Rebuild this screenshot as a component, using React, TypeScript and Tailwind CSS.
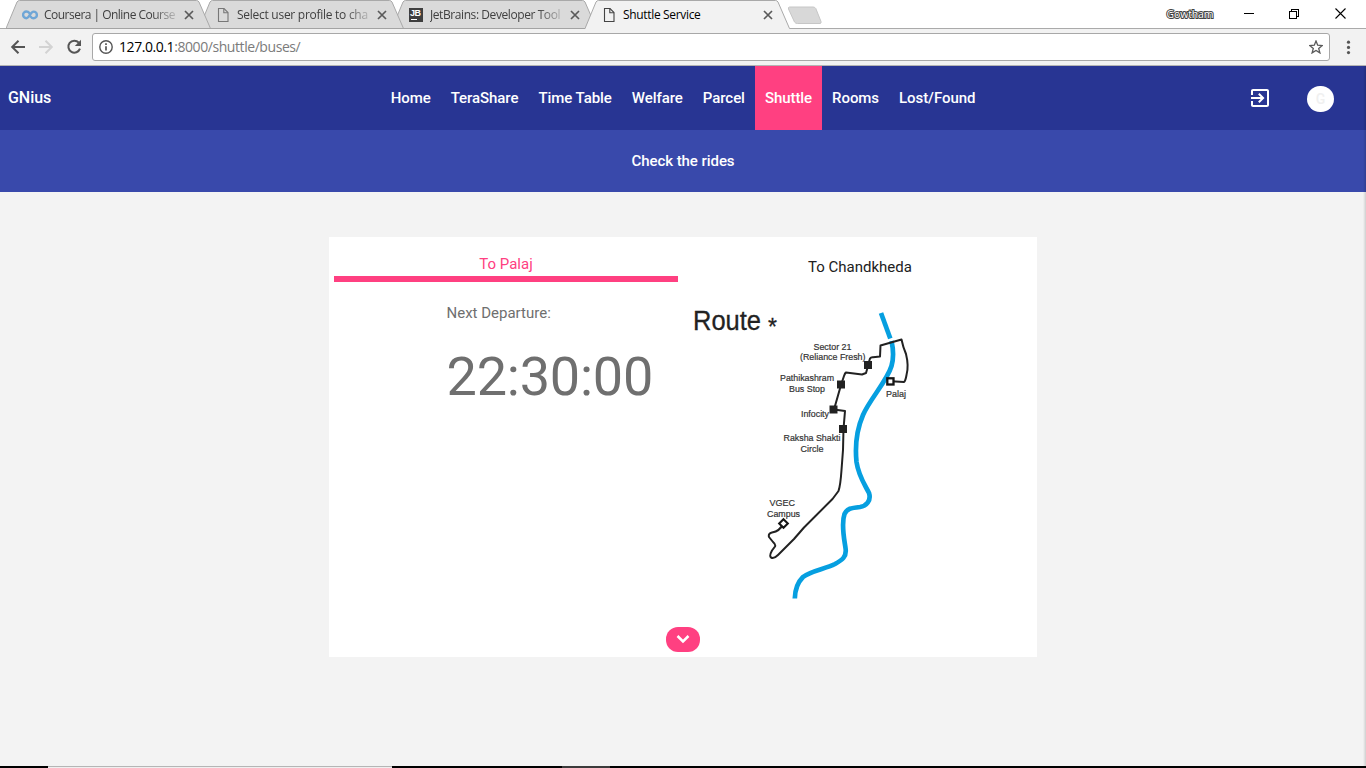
import React from "react";

type TabProps = {
  title: string;
  icon: React.ReactNode;
  active?: boolean;
  className: string;
  textClass: string;
};

function PageIcon({ color }: { color: string }) {
  return (
    <svg width="16" height="16" viewBox="0 0 16 16" fill="none" stroke={color} strokeWidth="1.1">
      <path d="M3.5 1.5H9L13 5.5V14.5H3.5Z" />
      <path d="M8.8 1.5V5.7H13" />
    </svg>
  );
}

function CourseraIcon() {
  return (
    <svg width="16" height="16" viewBox="0 0 16 16" fill="none" stroke="#6fa6d6" strokeWidth="2.4" strokeLinecap="round">
      <path d="M7.3 6C6.5 4.9 5.5 4.5 4.4 4.5A3.2 3.2 0 0 0 4.4 11.2C7.6 11.2 8.2 4.6 11.6 4.6A3.2 3.2 0 0 1 11.6 11.2C10.3 11.2 9.5 10.7 8.9 9.8" />
    </svg>
  );
}

function JetBrainsIcon() {
  return (
    <span className="relative mr-px block h-[14px] w-[15px] border-l border-transparent bg-[#3f3f3f] bg-clip-padding font-['Liberation_Sans'] text-[9px] font-bold leading-[10px] text-white">
      <span className="block pl-[1px] tracking-[-0.5px]">JB</span>
      <span className="absolute bottom-[2px] left-[2px] h-px w-[6px] bg-white" />
    </span>
  );
}

function Tab({ title, icon, active, className, textClass }: TabProps) {
  const fill = active ? "#f2f2f2" : "#dadada";
  return (
    <div className={`relative h-[29px] w-[206px] shrink-0 ${className}`}>
      <svg className="absolute inset-0" width="206" height="29" viewBox="0 0 206 29">
        <path d="M0 29L11 2Q12 .5 13.5 .5H190.500Q192 .5 193 2L204.500 28.500V29Z" fill={fill} />
        <path d="M0 28.500L11 2Q12 .5 13.500 .5H190.500Q192 .5 193 2L204.500 28.500" fill="none" stroke="#a9a9a9" strokeWidth="1" />
        {!active && <path d="M0 28.500H206" stroke="#a3a3a3" />}
      </svg>
      <div className="relative flex h-[29px] items-center pl-4 pt-px">
        {icon}
        <span
          className={`ml-[6px] w-[132px] whitespace-nowrap font-['Open_Sans',sans-serif] text-[12px] leading-4 ${textClass}`}
        >
          {title}
        </span>
        <svg className="ml-[8px]" width="10" height="10" viewBox="0 0 10 10" stroke="#5a5a5a" strokeWidth="1.7">
          <path d="M1 1L9 9M9 1L1 9" />
        </svg>
      </div>
    </div>
  );
}

const fade = "[mask-image:linear-gradient(to_right,black_108px,transparent_138px)] text-[#404040]";

function TabStrip() {
  return (
    <div className="flex h-[29px] bg-[linear-gradient(#fff_28px,#aaa_28px)] pl-[6px]">
      <Tab title="Coursera | Online Course" icon={<CourseraIcon />} className="z-30" textClass={`${fade} tracking-[-0.52px]`} />
      <Tab title="Select user profile to cha" icon={<PageIcon color="#777" />} className="z-20 -ml-[13px]" textClass={`${fade} tracking-[-0.27px]`} />
      <Tab title="JetBrains: Developer Tool" icon={<JetBrainsIcon />} className="z-10 -ml-[13px]" textClass={`${fade} tracking-[-0.42px]`} />
      <Tab title="Shuttle Service" icon={<PageIcon color="#444" />} active className="z-40 -ml-[13px]" textClass="text-black tracking-[-0.33px]" />
      <svg className="-ml-[4px] mt-[6px]" width="36" height="19" viewBox="0 0 36 19">
        <path d="M2.500 1H26Q28 1 28.800 2.500L34 15.500Q34.500 17.500 33 17.500H10.500Q8.500 17.500 7.500 16L1.500 3Q1 1 2.500 1Z" fill="#d8d8d8" stroke="#c6c6c6" />
      </svg>
      <div className="ml-auto flex h-7 items-center pr-[20px]">
        <svg className="mr-[29px]" width="50" height="18" viewBox="0 0 50 18">
          <text x="1.500" y="12.700" fontSize="10.500" fontFamily="Open Sans" textLength="47" fill="#fff" stroke="#444" strokeWidth="2" paintOrder="stroke">Gowtham</text>
        </svg>
        <svg className="mr-[35px]" width="10" height="10" shapeRendering="crispEdges">
          <path d="M0 4.500H10" stroke="#000" />
        </svg>
        <svg className="mr-[36px]" width="10" height="10" fill="none" stroke="#000" shapeRendering="crispEdges">
          <path d="M.5 2.500H7.500V9.500H.5ZM2.500 2.500V.5H9.500V7.500H7.500" />
        </svg>
        <svg className="-mt-px" width="11" height="11" stroke="#000" strokeWidth="1.100">
          <path d="M.5 .5L10.500 10.500M10.500 .5L.5 10.500" />
        </svg>
      </div>
    </div>
  );
}

function Toolbar() {
  return (
    <div className="flex h-[37px] items-center border-b border-[#b4b4b4] bg-[#f2f2f2] pl-[10px]">
      <svg width="16" height="16" viewBox="0 0 16 16" fill="none" stroke="#555" strokeWidth="2">
        <path d="M15 8H2.500M8.500 1.700L2.200 8L8.500 14.300" />
      </svg>
      <svg className="ml-[12px]" width="16" height="16" viewBox="0 0 16 16" fill="none" stroke="#d3d3d3" strokeWidth="2">
        <path d="M1 8H13.500M7.500 1.700L13.800 8L7.500 14.300" />
      </svg>
      <svg className="ml-[12px]" width="16" height="16" viewBox="0 0 16 16" fill="none" stroke="#555" strokeWidth="2">
        <path d="M12.800 3.600A6 6 0 1 0 14 9.700" />
        <path d="M15 .8V7H8.800Z" fill="#555" stroke="none" />
      </svg>
      <div className="ml-[10px] flex h-7 w-[1238px] items-center rounded-[3px] border border-[#a8a8a8] bg-white pl-[6px] pr-[6px]">
        <svg width="14" height="14" viewBox="0 0 14 14" fill="none" stroke="#555">
          <circle cx="7" cy="7" r="6.200" strokeWidth="1.400" />
          <path d="M7 6.200V10.500M7 3.300V5" strokeWidth="1.700" />
        </svg>
        <span className="ml-[6px] font-['Open_Sans',sans-serif] text-[14px] leading-5 tracking-[-0.43px] text-[#7b7b7b]">
          <span className="text-black">127.0.0.1</span>:8000/shuttle/buses/
        </span>
        <svg className="ml-auto" width="14" height="14" viewBox="0 0 14 14" fill="none" stroke="#5a5a5a" strokeWidth="1.300">
          <path d="M7 1L8.700 5.200L13.200 5.500L9.700 8.400L10.900 12.900L7 10.400L3.100 12.900L4.300 8.400L.8 5.500L5.300 5.200Z" />
        </svg>
      </div>
      <svg className="ml-[16px]" width="5" height="15" fill="#555">
        <circle cx="2.500" cy="2.200" r="1.600" />
        <circle cx="2.500" cy="7.400" r="1.600" />
        <circle cx="2.500" cy="12.600" r="1.600" />
      </svg>
    </div>
  );
}

const links = ["Home", "TeraShare", "Time Table", "Welfare", "Parcel", "Shuttle", "Rooms", "Lost/Found"];

function NavBar() {
  return (
    <nav className="grid h-16 grid-cols-[1fr_auto_1fr] items-center bg-[#283593] text-[15px] font-medium text-white">
      <span className="pl-2 text-[16px] tracking-[-0.05px]">GNius</span>
      <ul className="flex h-full tracking-[-0.06px]">
        {links.map((l) => (
          <li key={l} className={`flex items-center px-[10px] ${l === "Shuttle" ? "bg-[#ff4081]" : ""}`}>
            {l}
          </li>
        ))}
      </ul>
      <div className="flex items-center justify-end pr-8">
        <svg className="mr-[35px]" width="24" height="24" viewBox="0 0 24 24" fill="#fff">
          <path d="M10.090 15.590L11.500 17l5-5-5-5-1.410 1.410L12.670 11H3v2h9.670l-2.580 2.590zM19 3H5c-1.110 0-2 .9-2 2v4h2V5h14v14H5v-4H3v4c0 1.100.89 2 2 2h14c1.100 0 2-.9 2-2V5c0-1.100-.9-2-2-2z" />
        </svg>
        <span className="mt-[2px] flex h-[26px] w-[27px] items-center justify-center rounded-full bg-white text-[14px] text-[#f0f0f0]">G</span>
      </div>
    </nav>
  );
}

const stops: [number, number][] = [
  [868, 365],
  [841, 384.5],
  [833.5, 409.5],
  [843, 429],
];

const labels: { t: string; x: number; y: number; w: number }[] = [
  { t: "Sector 21", x: 813.500, y: 350, w: 38 },
  { t: "(Reliance Fresh)", x: 800, y: 360.300, w: 65.500 },
  { t: "Pathikashram", x: 780, y: 381, w: 54 },
  { t: "Bus Stop", x: 789, y: 391.500, w: 36 },
  { t: "Infocity", x: 801, y: 416.500, w: 28 },
  { t: "Raksha Shakti", x: 783.500, y: 441.200, w: 57 },
  { t: "Circle", x: 800.500, y: 451.700, w: 23 },
  { t: "Palaj", x: 886, y: 396.500, w: 20 },
  { t: "VGEC", x: 769.500, y: 506, w: 25.500 },
  { t: "Campus", x: 767, y: 516.500, w: 33 },
];

function RouteMap() {
  return (
    <svg width="344" height="310" viewBox="688 300 344 310" fontFamily="Liberation Sans, Arial, sans-serif" fill="#222">
      <text x="693" y="329.500" fontSize="27.500" textLength="68" lengthAdjust="spacingAndGlyphs" stroke="#222" strokeWidth="0.300">Route</text>
      <text x="768" y="334.500" fontSize="23" stroke="#222" strokeWidth="0.300">*</text>
      <g fill="none" stroke="#069fe0" strokeWidth="4.700">
        <path d="M881 313L890.300 338.500" />
        <path d="M891.500 341C893.300 349 893.500 359 891.500 366C887 381 870 399 863 415C857 429 855 447 856.500 462C858.500 476 865 485 869 493C871.500 501 866 506 860 507C851 508 847 508.500 844.500 514C841 524 844 538 845.500 548C847 557 842 560 835 564C825 569 810 571 803 577C797 583 795 590 794.800 598.500" />
      </g>
      <g fill="none" stroke="#222" strokeWidth="2" strokeLinejoin="round">
        <path d="M868 365L870 358.500Q871 357 873 357.300L880 356.500L880.500 345.500L901.500 339.500Q903 347 906 354Q909 366 906.500 375Q905.500 381 904 382L891 381.300" />
        <path d="M868 366L866 373L862 374.500L846 372.500Q845 373 844 376L841 385L834 409.500L845 411L843.500 429L843 450L841.500 470Q840.500 485 838.500 491L832.500 499L815 516.500L804 527.500L794 539L778 555Q774 559 771 557.500Q769 556 772 550.500L775 546.500Q776 544.500 773 542L769 537Q768 533.500 772 532.500Q780 531 783 524" />
      </g>
      {stops.map(([x, y]) => (
        <rect key={y} x={x - 4} y={y - 4} width="8" height="8" />
      ))}
      <rect x="887.300" y="378.300" width="6.200" height="6.200" fill="#fff" stroke="#151515" strokeWidth="2.300" />
      <path d="M783.500 519.300L787.800 523.500L783.500 527.700L779.200 523.500Z" fill="#fff" stroke="#151515" strokeWidth="2.100" />
      <g fontSize="9.200" fill="#333" stroke="#333" strokeWidth="0.200">
        {labels.map((l) => (
          <text key={l.t} x={l.x} y={l.y} textLength={l.w} lengthAdjust="spacingAndGlyphs">
            {l.t}
          </text>
        ))}
      </g>
    </svg>
  );
}

function ShuttleCard() {
  return (
    <section className="mx-auto flex h-[420px] w-[708px] flex-col bg-white px-[5px] pt-[10px]">
      <div className="grid grid-cols-2 pr-[4px] text-center text-[15px]">
        <div className="h-[35px] w-[344px] border-b-[6px] border-[#ff4081] pt-[6px] leading-[23px] text-[#ff4081]">To Palaj</div>
        <div className="pl-[11px] pt-[9px] leading-[23px] text-[#212121]">To Chandkheda</div>
      </div>
      <div className="flex pt-[18px]">
        <div className="w-[354px] pl-[112.5px] text-[#6f6f6f]">
          <p className="pt-[2px] text-[15px] leading-[22px]">Next Departure:</p>
          <p className="mt-[23px] text-[54px] leading-[60px] tracking-[-0.2px]">22:30:00</p>
        </div>
        <RouteMap />
      </div>
      <div className="flex justify-center pt-[17px]">
        <button className="flex h-[25px] w-[34px] items-center justify-center rounded-[12px] bg-[#ff4081]">
          <svg className="-mt-[2px]" width="14" height="10" viewBox="0 0 14 10" fill="none" stroke="#fff" strokeWidth="2.500">
            <path d="M1.500 2L7 7.500L12.500 2" />
          </svg>
        </button>
      </div>
    </section>
  );
}

export default function App() {
  return (
    <div className="flex h-[768px] w-[1366px] flex-col overflow-hidden bg-[#f3f3f3] font-[Roboto,sans-serif]">
      <TabStrip />
      <Toolbar />
      <main className="relative flex-1">
        <NavBar />
        <div className="flex h-[62px] items-center justify-center bg-[#3949ab] text-[15px] font-medium tracking-[-0.06px] text-white">Check the rides</div>
        <div className="pt-[45px]">
          <ShuttleCard />
        </div>
        <div className="absolute right-0 top-0 h-full w-[3px] bg-gradient-to-l from-black/15 to-transparent" />
      </main>
      <footer className="flex h-[2px] bg-black">
        <span className="ml-12 h-[2px] w-[344px] border-t border-[#b5b5b5] bg-[#efefef]" />
        <span className="ml-[170px] h-[2px] w-12 bg-[#3b3b3b]" />
      </footer>
    </div>
  );
}
